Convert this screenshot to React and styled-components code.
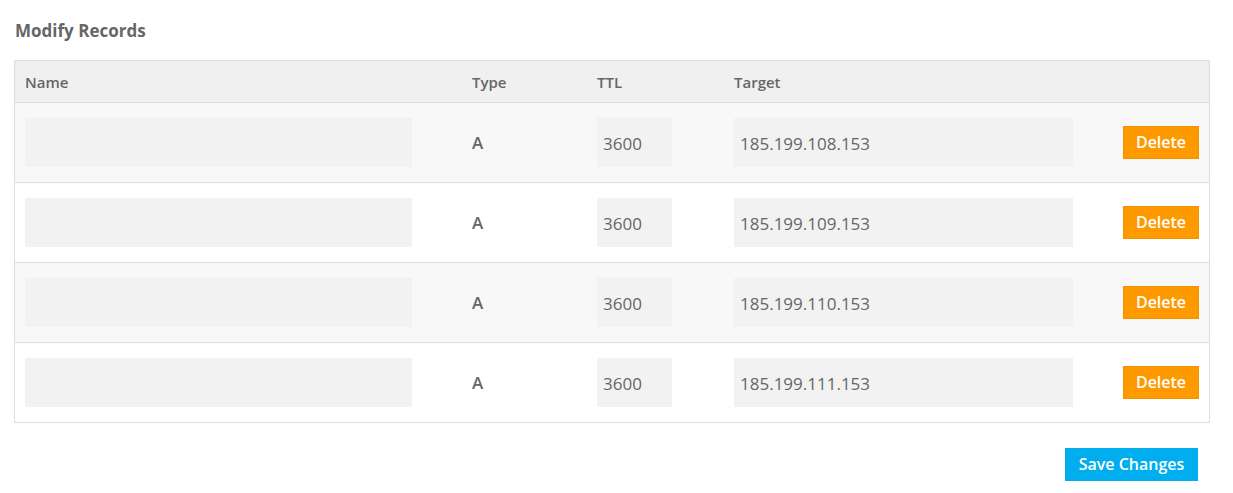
import React from 'react';
import styled, { createGlobalStyle } from 'styled-components';

const GlobalStyle = createGlobalStyle`
  body {
    margin: 0;
    background: #fff;
    font-family: "Open Sans", "Liberation Sans", sans-serif;
    color: #666;
  }
`;

const Page = styled.div`
  padding: 18px 23px 0 14px;
`;

const Title = styled.h3`
  margin: 0 0 16px 1px;
  font-size: 17px;
  font-weight: 700;
  line-height: 26px;
  color: #666;
`;

const Table = styled.div`
  border: 1px solid #ddd;
  width: 1194px;
`;

const Row = styled.div`
  display: grid;
  grid-template-columns: 447px 125px 137px 359px 126px;
  align-items: center;
  height: ${(p) => (p.$header ? '41px' : '79px')};
  background: ${(p) => (p.$header ? '#f0f0f0' : p.$striped ? '#f8f8f8' : '#fff')};
  border-top: ${(p) => (p.$first ? 'none' : '1px solid #ddd')};
`;

const Cell = styled.div`
  padding: 0 10px;
  display: flex;
  justify-content: ${(p) => (p.$right ? 'flex-end' : 'flex-start')};
`;

const HeadCell = styled(Cell)`
  font-size: 15px;
  font-weight: 600;
  color: #666;
`;

const Field = styled.input`
  box-sizing: border-box;
  height: 49px;
  width: ${(p) => p.$width || '100%'};
  border: none;
  background: #f2f2f2;
  padding: 2px 6px 0;
  font-family: inherit;
  font-size: 17px;
  color: #666;
  outline: none;
`;

const TypeText = styled.span`
  font-size: 17px;
  font-weight: 600;
  color: #666;
`;

const DeleteButton = styled.button`
  box-sizing: border-box;
  width: 76px;
  height: 33px;
  background: #ff9900;
  border: 1px solid #f39200;
  color: #fff;
  font-family: inherit;
  font-size: 16px;
  font-weight: 600;
  cursor: pointer;
  padding: 0 0 2px;
`;

const Footer = styled.div`
  display: flex;
  justify-content: flex-end;
  width: 1184px;
  margin-top: 25px;
`;

const SaveButton = styled.button`
  width: 133px;
  height: 33px;
  background: #00aeef;
  border: none;
  color: #fff;
  font-family: inherit;
  font-size: 16px;
  font-weight: 600;
  cursor: pointer;
  padding: 0 0 2px;
`;

const records = [
  { type: 'A', ttl: '3600', target: '185.199.108.153' },
  { type: 'A', ttl: '3600', target: '185.199.109.153' },
  { type: 'A', ttl: '3600', target: '185.199.110.153' },
  { type: 'A', ttl: '3600', target: '185.199.111.153' },
];

const App = () => (
  <Page>
    <GlobalStyle />
    <Title>Modify Records</Title>
    <Table>
      <Row $header $first>
        <HeadCell>Name</HeadCell>
        <HeadCell>Type</HeadCell>
        <HeadCell>TTL</HeadCell>
        <HeadCell>Target</HeadCell>
        <HeadCell />
      </Row>
      {records.map((r, i) => (
        <Row key={r.target} $striped={i % 2 === 0}>
          <Cell>
            <Field $width="387px" defaultValue="" />
          </Cell>
          <Cell>
            <TypeText>{r.type}</TypeText>
          </Cell>
          <Cell>
            <Field $width="75px" defaultValue={r.ttl} />
          </Cell>
          <Cell>
            <Field defaultValue={r.target} />
          </Cell>
          <Cell $right>
            <DeleteButton>Delete</DeleteButton>
          </Cell>
        </Row>
      ))}
    </Table>
    <Footer>
      <SaveButton>Save Changes</SaveButton>
    </Footer>
  </Page>
);

export default App;
